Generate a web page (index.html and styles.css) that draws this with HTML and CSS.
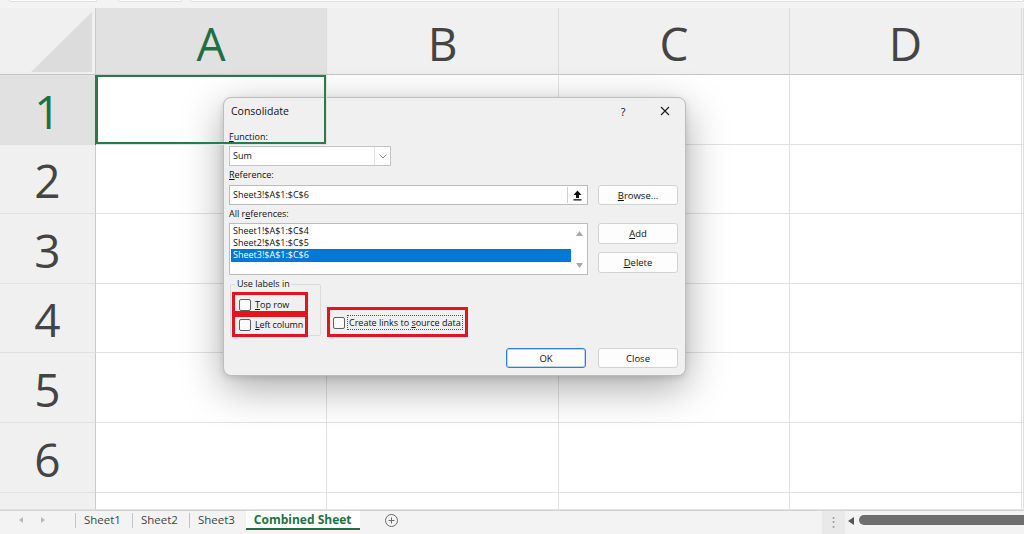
FILE: index.html
```html
<!DOCTYPE html>
<html>
<head>
    <meta charset="utf-8">
    <title>Consolidate</title>
    <link rel="stylesheet" href="styles.css">
</head>
<body>
<div class="app">
    <!-- bottom edge of the ribbon / formula bar -->
    <div class="ribbon-edge">
        <span class="stub name-box"></span>
        <span class="stub fx-box"></span>
        <span class="stub formula"></span>
    </div>

    <div class="sheet">
        <div class="corner">
            <svg width="95" height="66" viewBox="0 0 95 66"><polygon points="31,64 92,64 92,4" fill="#dcdcdc"/></svg>
        </div>
        <div class="col-head sel">A</div>
        <div class="col-head">B</div>
        <div class="col-head">C</div>
        <div class="col-head">D</div>
        <div class="col-head"></div>

        <div class="row-head sel">1</div>
        <div class="cell active"></div><div class="cell"></div><div class="cell"></div><div class="cell"></div><div class="cell"></div>
        <div class="row-head">2</div>
        <div class="cell"></div><div class="cell"></div><div class="cell"></div><div class="cell"></div><div class="cell"></div>
        <div class="row-head">3</div>
        <div class="cell"></div><div class="cell"></div><div class="cell"></div><div class="cell"></div><div class="cell"></div>
        <div class="row-head">4</div>
        <div class="cell"></div><div class="cell"></div><div class="cell"></div><div class="cell"></div><div class="cell"></div>
        <div class="row-head">5</div>
        <div class="cell"></div><div class="cell"></div><div class="cell"></div><div class="cell"></div><div class="cell"></div>
        <div class="row-head">6</div>
        <div class="cell"></div><div class="cell"></div><div class="cell"></div><div class="cell"></div><div class="cell"></div>
        <div class="row-head"></div>
        <div class="cell"></div><div class="cell"></div><div class="cell"></div><div class="cell"></div><div class="cell"></div>
    </div>

    <div class="tabbar">
        <div class="tab-nav">
            <svg width="4" height="6" viewBox="0 0 4 6"><polygon points="4,0 4,6 0,3" fill="#b9b9b9"/></svg>
            <svg width="4" height="6" viewBox="0 0 4 6"><polygon points="0,0 0,6 4,3" fill="#b9b9b9"/></svg>
        </div>
        <span class="tab-sep"></span>
        <span class="tab">Sheet1</span>
        <span class="tab-sep"></span>
        <span class="tab">Sheet2</span>
        <span class="tab-sep"></span>
        <span class="tab">Sheet3</span>
        <span class="tab current">Combined Sheet</span>
        <span class="add-sheet">
            <svg width="13" height="13" viewBox="0 0 13 13"><circle cx="6.5" cy="6.5" r="6" fill="none" stroke="#6b6b6b"/><path d="M6.5 3.5v6M3.5 6.5h6" stroke="#6b6b6b"/></svg>
        </span>
        <span class="tab-fill"></span>
        <span class="split-handle">⋮</span>
        <svg class="scroll-left" width="6" height="8" viewBox="0 0 6 8"><polygon points="6,0 6,8 0,4" fill="#555"/></svg>
        <span class="hscroll-thumb"></span>
    </div>

    <div class="dialog">
        <div class="titlebar">
            <span class="title">Consolidate</span>
            <span class="title-btn help">?</span>
            <span class="title-btn">
                <svg width="10" height="10" viewBox="0 0 10 10"><path d="M1 1l8 8M9 1l-8 8" stroke="#1b1b1b" stroke-width="1.1"/></svg>
            </span>
        </div>

        <div class="form">
            <div class="label"><u>F</u>unction:</div>
            <div class="select">
                <span class="select-text">Sum</span>
                <span class="select-arrow">
                    <svg width="8" height="5" viewBox="0 0 8 5"><polyline points="0.5,0.5 4,4 7.5,0.5" fill="none" stroke="#8a8a8a"/></svg>
                </span>
            </div>
            <div class="label"><u>R</u>eference:</div>
            <div class="ref-input">
                <span class="ref-text">Sheet3!$A$1:$C$6</span>
                <span class="collapse-btn">
                    <svg width="9" height="11" viewBox="0 0 9 11"><path d="M4.5 0.5L8.5 5H6V8H3V5H0.5Z" fill="#111"/><rect x="0.5" y="9.2" width="8" height="1.3" fill="#111"/></svg>
                </span>
            </div>
            <div class="btn browse-btn"><span><u>B</u>rowse...</span></div>
            <div class="label">All r<u>e</u>ferences:</div>
            <div class="listbox">
                <div class="list-items">
                    <div class="list-item">Sheet1!$A$1:$C$4</div>
                    <div class="list-item">Sheet2!$A$1:$C$5</div>
                    <div class="list-item picked">Sheet3!$A$1:$C$6</div>
                </div>
                <div class="list-scroll">
                    <svg width="7" height="5" viewBox="0 0 7 5"><polygon points="0,5 7,5 3.5,0" fill="#a8a8a8"/></svg>
                    <svg width="7" height="5" viewBox="0 0 7 5"><polygon points="0,0 7,0 3.5,5" fill="#a8a8a8"/></svg>
                </div>
            </div>
            <div class="list-btns">
                <div class="btn"><span><u>A</u>dd</span></div>
                <div class="btn"><span><u>D</u>elete</span></div>
            </div>
        </div>

        <div class="options">
            <fieldset class="labels-group">
                <legend>Use labels in</legend>
                <div class="mark mark-top">
                    <span class="check"></span><span><u>T</u>op row</span>
                </div>
                <div class="mark mark-left">
                    <span class="check"></span><span><u>L</u>eft column</span>
                </div>
            </fieldset>
            <div class="mark mark-links">
                <span class="check"></span><span class="focus-text">Create links to <u>s</u>ource data</span>
            </div>
        </div>

        <div class="footer">
            <div class="btn default">OK</div>
            <div class="btn">Close</div>
        </div>
    </div>
</div>
</body>
</html>
```

FILE: styles.css
```css
* {
    margin: 0;
    padding: 0;
    box-sizing: border-box;
}

body {
    width: 1024px;
    height: 534px;
    overflow: hidden;
    background: #fff;
    font-family: "Open Sans", "Noto Sans", sans-serif;
    color: #1b1b1b;
}

.app {
    position: relative;
    width: 1024px;
    height: 534px;
    display: flex;
    flex-direction: column;
}

/* ribbon remains */
.ribbon-edge {
    height: 8px;
    background: #f3f3f3;
    display: flex;
    padding-left: 9px;
}

.stub {
    height: 2px;
    background: #fff;
    border: 1px solid #dedede;
    border-top: none;
    border-radius: 0 0 3px 3px;
}

.name-box { width: 88px; }
.fx-box { width: 64px; margin-left: 21px; }
.formula { flex: 1; margin-left: 8px; }

/* worksheet grid */
.sheet {
    display: grid;
    grid-template-columns: 96px 231px 232px 231px 232px 2px;
    grid-template-rows: 67px 70px 69px 70px 69px 70px 70px 17px;
}

.corner {
    background: #f0f0f0;
    border-right: 1px solid #cbcbcb;
    border-bottom: 1px solid #c6c6c6;
}

.corner svg {
    display: block;
}

.col-head {
    background: #f0f0f0;
    border-right: 1px solid #dcdcdc;
    border-bottom: 1px solid #c6c6c6;
    display: flex;
    align-items: center;
    justify-content: center;
    padding-top: 4px;
    font-size: 46px;
    color: #444;
}

.row-head {
    background: #f0f0f0;
    border-right: 1px solid #cbcbcb;
    border-bottom: 1px solid #e0e0e0;
    display: flex;
    align-items: center;
    justify-content: center;
    padding-top: 2px;
    font-size: 46px;
    color: #444;
}

.col-head.sel, .row-head.sel {
    background: #e1e1e1;
    color: #1f6f43;
}

.cell {
    border-right: 1px solid #e2e2e2;
    border-bottom: 1px solid #e2e2e2;
}

.cell.active {
    position: relative;
    z-index: 1;
    box-shadow: inset 0 0 0 2px #2a7a4d, -1px 0 0 0 #2a7a4d;
}

/* sheet tabs and horizontal scroll */
.tabbar {
    flex: 1;
    display: flex;
    align-items: flex-start;
    background: #f3f3f3;
    border-top: 1px solid #d4d4d4;
    font-size: 11.5px;
    color: #444;
}

.tab-nav {
    width: 75px;
    height: 18px;
    display: flex;
    align-items: center;
    gap: 18px;
    padding-left: 19px;
}

.tab-sep {
    width: 1px;
    height: 15px;
    margin-top: 2px;
    background: #c4c4c4;
}

.tab {
    height: 19px;
    line-height: 17px;
    padding: 0 11px 0 8px;
}

.tab.current {
    background: #fff;
    color: #1e7145;
    font-weight: 700;
    font-size: 12px;
    padding: 0 8px 0 8px;
    border-bottom: 2px solid #1e7145;
}

.add-sheet {
    margin-left: 25px;
    margin-top: 3px;
    height: 13px;
}

.add-sheet svg, .scroll-left {
    display: block;
}

.tab-fill {
    flex: 1;
}

.split-handle {
    width: 23px;
    height: 23px;
    background: #e9e9e9;
    color: #9a9a9a;
    text-align: center;
    line-height: 20px;
    font-size: 13px;
}

.scroll-left {
    margin: 6px 5px 0 3px;
}

.hscroll-thumb {
    width: 165px;
    height: 10px;
    margin-top: 4px;
    background: #6e6e6e;
    border-radius: 5px 0 0 5px;
}

/* Consolidate dialog */
.dialog {
    position: absolute;
    left: 223px;
    top: 97px;
    width: 463px;
    height: 279px;
    background: #f0f0f0;
    border: 1px solid #bdbdbd;
    border-radius: 8px;
    box-shadow: 0 12px 40px rgba(0, 0, 0, 0.34), 0 2px 6px rgba(0, 0, 0, 0.12);
    font-size: 9px;
    color: #111;
}

.titlebar {
    height: 26px;
    display: flex;
    align-items: center;
    padding: 0 5px 0 7px;
}

.title {
    flex: 1;
    font-size: 10.5px;
}

.title-btn {
    width: 30px;
    text-align: center;
    font-size: 11px;
}

.title-btn svg {
    display: block;
    margin: 0 auto;
}

.help {
    margin-right: 12px;
}

.form {
    display: grid;
    grid-template-columns: 359px 80px;
    column-gap: 10px;
    padding: 0 7px 0 5px;
}

.form > * {
    grid-column: 1;
}

.label {
    line-height: 12px;
    margin-top: 3px;
}

.label:first-child {
    margin-top: 7px;
}

.select {
    width: 162px;
    height: 20px;
    margin-top: 3px;
    background: #fff;
    border: 1px solid #c4c4c4;
    display: flex;
}

.select-text {
    flex: 1;
    line-height: 18px;
    padding-left: 3px;
}

.select-arrow {
    width: 16px;
    border-left: 1px solid #e2e2e2;
    display: flex;
    align-items: center;
    justify-content: center;
}

.ref-input {
    height: 20px;
    margin-top: 4px;
    background: #fff;
    border: 1px solid #bcbcbc;
    display: flex;
}

.ref-text {
    flex: 1;
    line-height: 18px;
    padding-left: 3px;
}

.collapse-btn {
    width: 19px;
    margin: 1px;
    border-left: 1px solid #d0d0d0;
    display: flex;
    align-items: center;
    justify-content: center;
}

.btn {
    height: 20px;
    background: #fdfdfd;
    border: 1px solid #d3d3d3;
    border-radius: 3px;
    display: flex;
    align-items: center;
    justify-content: center;
    font-size: 9.5px;
}

.form .browse-btn {
    grid-column: 2;
    grid-row: 4;
    margin-top: 4px;
}

.listbox {
    height: 52px;
    margin-top: 3px;
    background: #fff;
    border: 1px solid #bcbcbc;
    display: flex;
}

.list-items {
    flex: 1;
    padding: 1px 0 0 1px;
}

.list-item {
    line-height: 12px;
    height: 12px;
    padding-left: 2px;
}

.list-item.picked {
    background: #0078d7;
    color: #fff;
    height: 13px;
}

.list-scroll {
    width: 16px;
    display: flex;
    flex-direction: column;
    align-items: center;
    justify-content: space-between;
    padding: 7px 0 6px;
}

.form .list-btns {
    grid-column: 2;
    grid-row: 6;
    margin-top: 3px;
    display: flex;
    flex-direction: column;
    gap: 8px;
}

.list-btns .btn {
    height: 21px;
}

.options {
    display: flex;
    align-items: flex-end;
    margin-top: 3px;
    padding-left: 6px;
}

.labels-group {
    width: 91px;
    border: 1px solid #dadada;
    border-radius: 2px;
    padding: 2px 0 0 1px;
}

.labels-group legend {
    line-height: 12px;
    padding: 0 2px;
    margin-left: 3px;
}

.mark {
    border: 3px solid #e3141f;
    display: flex;
    align-items: center;
    gap: 4px;
}

.mark-top {
    width: 76px;
    padding: 3px 0 0 4px;
}

.mark-left {
    width: 76px;
    padding: 1px 0 3px 4px;
    margin-bottom: -2px;
    letter-spacing: -0.15px;
}

.mark-links {
    margin-left: 6px;
    margin-bottom: -1px;
    padding: 5px 2px 4px 3px;
    gap: 2px;
}

.check {
    width: 12px;
    height: 12px;
    border: 1px solid #606060;
    border-radius: 2px;
    background: #fbfbfb;
}

.focus-text {
    border: 1px dotted #555;
    line-height: 13px;
    padding: 0 1px;
}

.footer {
    display: flex;
    justify-content: flex-end;
    gap: 12px;
    margin-top: 12px;
    padding-right: 7px;
}

.footer .btn {
    width: 80px;
}

.btn.default {
    border-color: #2a7fd2;
    box-shadow: inset 0 0 0 1px rgba(42, 127, 210, 0.3);
}
```
